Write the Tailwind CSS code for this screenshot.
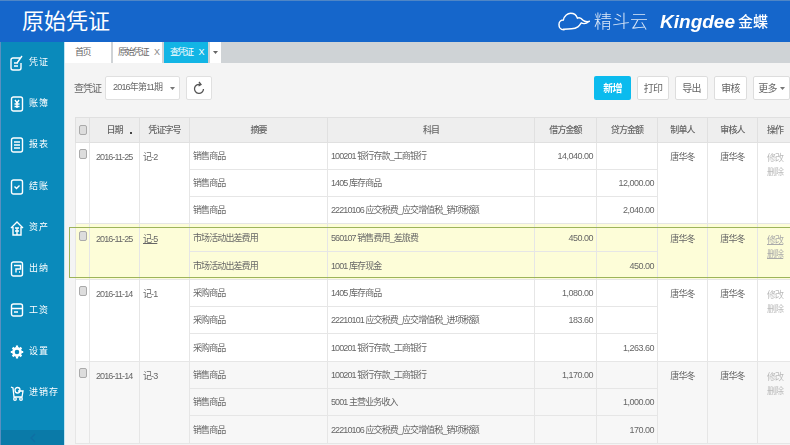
<!DOCTYPE html>
<html lang="zh"><head><meta charset="utf-8">
<script src="https://cdn.jsdelivr.net/npm/@tailwindcss/browser@4"></script>
</head>
<body class="m-0 w-[790px] h-[445px] overflow-hidden bg-[#f4f4f4] font-['Liberation_Sans','Noto_Sans_CJK_SC',sans-serif] text-[#666] blur-[0.3px]">
<header class="h-[42px] bg-[#1566cb] border-t border-[#4f86c6] flex items-center pl-[22px] pr-[22px] text-white">
  <h1 class="text-[22px] font-normal leading-none">原始凭证</h1>
  <div class="ml-auto flex items-center">
    <svg width="32" height="19" viewBox="0 0 33 19" fill="none" stroke="white" stroke-width="1.500"><path d="M6 18C2 18 1 14.500 1 12.500 1 9.500 3.500 8 5.500 8 6.500 3.500 10 1 13 1c3.500 0 6 2 7 5 2-1 4 0 5.500 2 1.500 1.500 3.500 2 6.500 1.500-3 2.500-6 2.500-8 1.500-2 3-4 6-10 6-3 .5-6 .5-8 .5z"/></svg>
    <span class="ml-[4px] text-[18px] font-light leading-none text-[#dbe8f8]">精斗云</span>
    <span class="ml-[12px] text-[19px] font-bold italic leading-none font-['Liberation_Sans',sans-serif]">Kingdee</span>
    <span class="ml-[3px] text-[15px] font-medium leading-none">金蝶</span>
  </div>
</header>
<div class="flex h-[403px]">
  <nav class="w-[64px] shrink-0 bg-[#0a8abb] border-l border-[#5a8fc0] flex flex-col text-white text-[9px]">
    <a class="h-[41.3px] flex items-center pl-[9px] gap-[5px]"><svg class="w-[14px] h-[16px]" viewBox="0 0 14 16" fill="none" stroke="white" stroke-width="1.400"><path d="M10 3H3a2 2 0 0 0-2 2v8a2 2 0 0 0 2 2h6a2 2 0 0 0 2-2V8"/><path d="M4 8h4M4 11h4M7 8l5-7"/></svg><span class="tracking-[1px]">凭证</span></a>
    <a class="h-[41.3px] flex items-center pl-[9px] gap-[5px]"><svg class="w-[14px] h-[16px]" viewBox="0 0 14 16" fill="none" stroke="white" stroke-width="1.400"><rect x="1.500" y="1" width="11" height="14" rx="2"/><path d="M5 4l2 3 2-3M4.500 8h5M4.500 10.500h5M7 7v5"/></svg><span class="tracking-[1px]">账簿</span></a>
    <a class="h-[41.3px] flex items-center pl-[9px] gap-[5px]"><svg class="w-[14px] h-[16px]" viewBox="0 0 14 16" fill="none" stroke="white" stroke-width="1.400"><rect x="1.500" y="1" width="11" height="14" rx="2"/><path d="M4 5h6M4 8h6M4 11h6"/></svg><span class="tracking-[1px]">报表</span></a>
    <a class="h-[41.3px] flex items-center pl-[9px] gap-[5px]"><svg class="w-[14px] h-[16px]" viewBox="0 0 14 16" fill="none" stroke="white" stroke-width="1.400"><rect x="1.500" y="1" width="11" height="14" rx="2"/><path d="M4.500 7.500l2 2 3-3"/></svg><span class="tracking-[1px]">结账</span></a>
    <a class="h-[41.3px] flex items-center pl-[9px] gap-[5px]"><svg class="w-[14px] h-[16px]" viewBox="0 0 14 16" fill="none" stroke="white" stroke-width="1.400"><path d="M1 8l6-6 6 6M3 7v8h8V7M5 8h4M5 11h4M7 8v7"/></svg><span class="tracking-[1px]">资产</span></a>
    <a class="h-[41.3px] flex items-center pl-[9px] gap-[5px]"><svg class="w-[14px] h-[16px]" viewBox="0 0 14 16" fill="none" stroke="white" stroke-width="1.400"><rect x="1.500" y="1" width="11" height="14" rx="2"/><path d="M4 4.500h6.500V8H6v3.500M9 11h1"/></svg><span class="tracking-[1px]">出纳</span></a>
    <a class="h-[41.3px] flex items-center pl-[9px] gap-[5px]"><svg class="w-[14px] h-[16px]" viewBox="0 0 14 16" fill="none" stroke="white" stroke-width="1.400"><rect x="1.500" y="2" width="11" height="12" rx="2"/><path d="M1.500 6.500h11M4 10h4"/></svg><span class="tracking-[1px]">工资</span></a>
    <a class="h-[41.3px] flex items-center pl-[9px] gap-[5px]"><svg class="w-[14px] h-[16px]" viewBox="0 0 14 16" fill="none" stroke="white" stroke-width="2.600" ><circle cx="7" cy="8" r="3.600"/><path stroke-width="2.200" d="M7 1.500v2M7 12.500v2M.8 8h2M11.200 8h2M2.600 3.600l1.400 1.400M10 11l1.400 1.400M2.600 12.400L4 11M10 5l1.400-1.400"/></svg><span class="tracking-[1px]">设置</span></a>
    <a class="h-[41.3px] flex items-center pl-[9px] gap-[5px]"><svg class="w-[14px] h-[16px]" viewBox="0 0 14 16" fill="none" stroke="white" stroke-width="1.300"><path d="M1 2l2 1 1 9h8l1-6H8"/><path d="M5 5a2.500 2.500 0 0 1 5 0c0 2-1 3-2.500 3S5 7 5 5z"/><circle cx="5" cy="14" r="1.300"/><circle cx="11" cy="14" r="1.300"/></svg><span class="tracking-[1px]">进销存</span></a>
    <div class="mt-auto h-[15px] bg-[#0a7aa8] flex items-center justify-center"><svg width="6" height="10" viewBox="0 0 6 10" fill="none" stroke="#0f6fa3" stroke-width="1.200"><path d="M5 1L1 5l4 4"/></svg></div>
  </nav>
  <main class="flex-1 min-w-0 border-l border-[#bfe3f2] flex flex-col overflow-hidden">
    <div class="h-[21px] shrink-0 bg-[#cfd3d6] flex gap-[2px] text-[9px] tracking-[-1.500px]">
      <span class="w-[46px] bg-white pl-[10px] leading-[21px]">首页</span>
      <span class="w-[49px] bg-white pl-[5px] leading-[21px] flex gap-[6px]">原始凭证<i class="not-italic tracking-normal text-[#888]">X</i></span>
      <span class="w-[44px] bg-[#12b5e5] text-white pl-[6px] leading-[21px] flex gap-[6px]">查凭证<i class="not-italic tracking-normal">X</i></span>
      <span class="w-[11px] bg-white flex items-center justify-center"><svg width="5" height="3" viewBox="0 0 5 3"><path d="M0 0h5L2.500 3z" fill="#666"/></svg></span>
    </div>
    <div class="h-[54px] shrink-0 pl-[9px] flex items-center text-[10px]">
      <span class="w-[31px] tracking-[-1px] mt-[-4px]">查凭证</span>
      <div class="mt-[-4px] w-[75px] h-[24px] bg-white border border-[#e0e0e0] rounded-[2px] flex items-center pl-[7px] text-[9px] tracking-[-0.800px]">2016年第11期<svg class="ml-auto mr-[4px]" width="5" height="3" viewBox="0 0 5 3"><path d="M0 0h5L2.500 3z" fill="#777"/></svg></div>
      <div class="mt-[-4px] ml-[6px] w-[26px] h-[24px] bg-white border border-[#e0e0e0] rounded-[2px] flex items-center justify-center"><svg width="12" height="14" viewBox="0 0 12 14" fill="none" stroke="#555" stroke-width="1.300"><path d="M7 3.500A4.500 4.500 0 1 0 10.500 8"/><path d="M6 1l2 2.500-2.500 1.500"/></svg></div>
      <div class="mt-[-4px] ml-auto flex gap-[6px] text-[10px] tracking-[-0.800px]">
        <button class="w-[37px] h-[24px] bg-[#0bbbee] text-white font-bold rounded-[2px]">新增</button>
        <button class="w-[32px] h-[24px] bg-white border border-[#ddd] rounded-[2px]">打印</button>
        <button class="w-[33px] h-[24px] bg-white border border-[#ddd] rounded-[2px]">导出</button>
        <button class="w-[33px] h-[24px] bg-white border border-[#ddd] rounded-[2px]">审核</button>
        <button class="w-[37px] h-[24px] bg-white border border-[#ddd] rounded-[2px] flex items-center justify-center gap-[3px]">更多<svg width="5" height="3" viewBox="0 0 5 3"><path d="M0 0h5L2.500 3z" fill="#777"/></svg></button>
      </div>
    </div>
    <div class="relative ml-[10px] w-[760px]">
      <table class="table-fixed border-collapse w-[760px] text-[9px] tracking-[-0.900px] [&_td]:border [&_td]:border-[#e6e6e6] [&_th]:border [&_th]:border-[#e0e0e0] [&_th]:pt-[2px] [&_td:not(.align-top)]:pt-[2px]">
        <colgroup><col class="w-[14px]"><col class="w-[50px]"><col class="w-[50px]"><col class="w-[138px]"><col class="w-[207px]"><col class="w-[62px]"><col class="w-[61px]"><col class="w-[50px]"><col class="w-[50px]"><col class="w-[78px]"></colgroup>
        <thead class="bg-[#eeeeee] text-[9px] font-medium">
          <tr class="h-[25px]"><th><span class="block mx-auto mt-[-2px] w-[8px] h-[10px] bg-[#ddd] border border-[#aaa] rounded-[2px]"></span></th><th class="relative font-medium">日期<span class="absolute right-[7px] top-[14px] w-[2px] h-[2px] bg-[#444]"></span></th><th class="font-medium">凭证字号</th><th class="font-medium">摘要</th><th class="font-medium">科目</th><th class="font-medium">借方金额</th><th class="font-medium">贷方金额</th><th class="font-medium">制单人</th><th class="font-medium">审核人</th><th class="font-medium text-left pl-[9px]">操作</th></tr>
        </thead>
        <tbody>
          <tr class="h-[27px] bg-white"><td rowspan="3" class="align-top pt-[6px]"><span class="block mx-auto w-[8px] h-[10px] bg-[#ddd] border border-[#aaa] rounded-[2px]"></span></td><td rowspan="3" class="align-top pt-[8px] pl-[6px]">2016-11-25</td><td rowspan="3" class="align-top pt-[8px] pl-[3px]">记-2</td><td class="pl-[3px]">销售商品</td><td class="pl-[3px]">100201 银行存款_工商银行</td><td class="text-right pr-[3px] tracking-[-0.500px]">14,040.00</td><td></td><td rowspan="3" class="align-top pt-[8px] text-center">唐华冬</td><td rowspan="3" class="align-top pt-[8px] text-center">唐华冬</td><td rowspan="3" class="align-top pt-[8px] pl-[9px] text-[#bbb] leading-[14px]">修改<br>删除</td></tr>
          <tr class="h-[27px] bg-white"><td class="pl-[3px]">销售商品</td><td class="pl-[3px]">1405 库存商品</td><td></td><td class="text-right pr-[3px] tracking-[-0.500px]">12,000.00</td></tr>
          <tr class="h-[27px] bg-white"><td class="pl-[3px]">销售商品</td><td class="pl-[3px]">22210106 应交税费_应交增值税_销项税额</td><td></td><td class="text-right pr-[3px] tracking-[-0.500px]">2,040.00</td></tr>
          <tr class="h-[28px] bg-[#fdfdd8]"><td rowspan="2" class="align-top pt-[7px]"><span class="block mx-auto w-[8px] h-[10px] bg-[#ddd] border border-[#aaa] rounded-[2px]"></span></td><td rowspan="2" class="align-top pt-[9px] pl-[6px]">2016-11-25</td><td rowspan="2" class="align-top pt-[9px] pl-[3px] underline">记-5</td><td class="pl-[3px]">市场活动出差费用</td><td class="pl-[3px]">560107 销售费用_差旅费</td><td class="text-right pr-[3px] tracking-[-0.500px]">450.00</td><td></td><td rowspan="2" class="align-top pt-[9px] text-center">唐华冬</td><td rowspan="2" class="align-top pt-[9px] text-center">唐华冬</td><td rowspan="2" class="align-top pt-[9px] pl-[9px] text-[#aaa] underline leading-[14px]">修改<br>删除</td></tr>
          <tr class="h-[28px] bg-[#fdfdd8]"><td class="pl-[3px]">市场活动出差费用</td><td class="pl-[3px]">1001 库存现金</td><td></td><td class="text-right pr-[3px] tracking-[-0.500px]">450.00</td></tr>
          <tr class="h-[27px] bg-white"><td rowspan="3" class="align-top pt-[6px]"><span class="block mx-auto w-[8px] h-[10px] bg-[#ddd] border border-[#aaa] rounded-[2px]"></span></td><td rowspan="3" class="align-top pt-[8px] pl-[6px]">2016-11-14</td><td rowspan="3" class="align-top pt-[8px] pl-[3px]">记-1</td><td class="pl-[3px]">采购商品</td><td class="pl-[3px]">1405 库存商品</td><td class="text-right pr-[3px] tracking-[-0.500px]">1,080.00</td><td></td><td rowspan="3" class="align-top pt-[8px] text-center">唐华冬</td><td rowspan="3" class="align-top pt-[8px] text-center">唐华冬</td><td rowspan="3" class="align-top pt-[8px] pl-[9px] text-[#bbb] leading-[14px]">修改<br>删除</td></tr>
          <tr class="h-[27px] bg-white"><td class="pl-[3px]">采购商品</td><td class="pl-[3px]">22210101 应交税费_应交增值税_进项税额</td><td class="text-right pr-[3px] tracking-[-0.500px]">183.60</td><td></td></tr>
          <tr class="h-[28px] bg-white"><td class="pl-[3px]">采购商品</td><td class="pl-[3px]">100201 银行存款_工商银行</td><td></td><td class="text-right pr-[3px] tracking-[-0.500px]">1,263.60</td></tr>
          <tr class="h-[27px] bg-[#f7f7f7]"><td rowspan="3" class="align-top pt-[6px]"><span class="block mx-auto w-[8px] h-[10px] bg-[#ddd] border border-[#aaa] rounded-[2px]"></span></td><td rowspan="3" class="align-top pt-[8px] pl-[6px]">2016-11-14</td><td rowspan="3" class="align-top pt-[8px] pl-[3px]">记-3</td><td class="pl-[3px]">销售商品</td><td class="pl-[3px]">100201 银行存款_工商银行</td><td class="text-right pr-[3px] tracking-[-0.500px]">1,170.00</td><td></td><td rowspan="3" class="align-top pt-[8px] text-center">唐华冬</td><td rowspan="3" class="align-top pt-[8px] text-center">唐华冬</td><td rowspan="3" class="align-top pt-[8px] pl-[9px] text-[#bbb] leading-[14px]">修改<br>删除</td></tr>
          <tr class="h-[27px] bg-[#f7f7f7]"><td class="pl-[3px]">销售商品</td><td class="pl-[3px]">5001 主营业务收入</td><td></td><td class="text-right pr-[3px] tracking-[-0.500px]">1,000.00</td></tr>
          <tr class="h-[28px] bg-[#f7f7f7]"><td class="pl-[3px]">销售商品</td><td class="pl-[3px]">22210106 应交税费_应交增值税_销项税额</td><td></td><td class="text-right pr-[3px] tracking-[-0.500px]">170.00</td></tr>
        </tbody>
      </table>
      <div class="absolute left-[-6px] top-[110px] w-[780px] h-[51px] border border-[#9db45a] pointer-events-none"></div>
    </div>
  </main>
</div>
</body></html>
